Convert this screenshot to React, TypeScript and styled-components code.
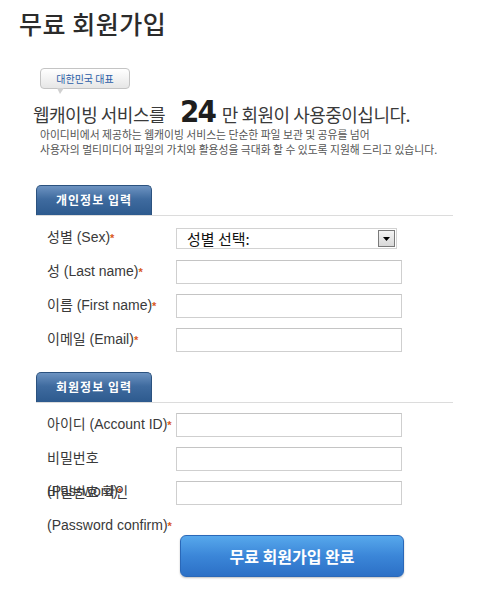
import React from "react"
import styled, { createGlobalStyle } from "styled-components"

const GlobalStyle = createGlobalStyle`
  body {
    margin: 0;
    background: #ffffff;
    font-family: "Liberation Sans", "Noto Sans CJK KR", sans-serif;
    color: #333333;
  }
`

const Page = styled.div`
  width: 494px;
  height: 606px;
  overflow: hidden;
`

const Title = styled.h1`
  margin: 0;
  padding: 8px 0 0 19px;
  height: 30px;
  font-family: "Noto Sans CJK KR", sans-serif;
  font-size: 25px;
  line-height: 30px;
  font-weight: 500;
  letter-spacing: 0.5px;
  color: #2b2b2b;
`

const Intro = styled.div`
  padding: 30px 0 0 33px;
`

const Badge = styled.div`
  position: relative;
  margin-left: 7px;
  width: 90px;
  height: 21px;
  box-sizing: border-box;
  border: 1px solid #c4c4c4;
  border-radius: 4px;
  background: linear-gradient(#ffffff, #e6e6e6);
  color: #2b5ca6;
  font-family: "Noto Sans CJK KR", sans-serif;
  font-size: 10px;
  line-height: 19px;
  text-align: center;

  &::after {
    content: "";
    position: absolute;
    left: 16px;
    bottom: -6px;
    width: 0;
    height: 0;
    border-left: 3px solid transparent;
    border-right: 4px solid transparent;
    border-top: 6px solid #d0d0d0;
  }
`

const Headline = styled.div`
  display: flex;
  align-items: baseline;
  margin-top: 4px;
  height: 32px;
  font-family: "Noto Sans CJK KR", sans-serif;
  font-size: 18px;
  letter-spacing: -0.5px;
  color: #3a3a3a;
  white-space: nowrap;
`

const BigNumber = styled.span`
  display: inline-block;
  margin: 0 7px 0 15px;
  font-family: "Liberation Sans Narrow", "DejaVu Sans Condensed", "Liberation Sans", sans-serif;
  font-stretch: condensed;
  font-size: 31px;
  font-weight: 700;
  letter-spacing: -2px;
  color: #1e1e1e;
`

const Description = styled.p`
  margin: 2px 0 0 7px;
  font-family: "Noto Sans CJK KR", sans-serif;
  font-size: 10.8px;
  line-height: 15px;
  color: #555555;
  white-space: nowrap;
`

const Section = styled.div<{ $top: number }>`
  margin: ${(p) => p.$top}px 0 0 36px;
  width: 417px;
`

const TabBar = styled.div`
  border-bottom: 1px solid #dcdcdc;
  margin-bottom: 5px;
`

const Tab = styled.div`
  width: 116px;
  height: 30px;
  box-sizing: border-box;
  border: 1px solid #2b527f;
  border-bottom: none;
  border-radius: 5px 5px 0 0;
  background: linear-gradient(#6d93c1, #3f6b9f 45%, #2d5a8e);
  color: #ffffff;
  font-family: "Noto Sans CJK KR", sans-serif;
  font-size: 12px;
  font-weight: 700;
  letter-spacing: 1px;
  line-height: 28px;
  text-align: center;
`

const Row = styled.div`
  display: grid;
  grid-template-columns: 140px 226px;
  grid-template-rows: 34px;
  align-items: start;
  height: 34px;
`

const Label = styled.div`
  padding-left: 11px;
  font-size: 14px;
  line-height: 33px;
  color: #3a3a3a;
  white-space: nowrap;
`

const Star = styled.span`
  color: #d9581c;
  font-weight: 700;
  font-size: 11px;
`

const Input = styled.input`
  align-self: center;
  box-sizing: border-box;
  width: 226px;
  height: 24px;
  margin: 0;
  border: 1px solid #cfcfcf;
  border-top-color: #c4c4c4;
  background: #ffffff;
`

const SelectBox = styled.div`
  align-self: center;
  display: flex;
  align-items: center;
  justify-content: space-between;
  box-sizing: border-box;
  width: 221px;
  height: 21px;
  margin-top: 1px;
  padding: 0 1px 0 10px;
  border: 1px solid #d2d2d2;
  background: #ffffff;
  font-family: "Noto Sans CJK KR", sans-serif;
  font-size: 15px;
  color: #111111;
`

const DropButton = styled.span`
  display: flex;
  align-items: center;
  justify-content: center;
  box-sizing: border-box;
  width: 17px;
  height: 17px;
  border: 1px solid #7a7a7a;
  background: linear-gradient(#f4f4f4, #d8d8d8);
`

const SubmitButton = styled.button`
  display: block;
  margin: 25px 0 0 180px;
  width: 224px;
  height: 42px;
  border: 1px solid #2a68b8;
  border-radius: 6px;
  background: linear-gradient(#57a8ec, #3b86d8 50%, #2c70c6);
  box-shadow: 0 1px 2px rgba(0, 0, 0, 0.25);
  color: #ffffff;
  font-family: "Noto Sans CJK KR", sans-serif;
  font-size: 16px;
  font-weight: 700;
  cursor: pointer;
`

function FieldRow({ label, children }: { label: React.ReactNode; children: React.ReactNode }) {
  return (
    <Row>
      <Label>{label}</Label>
      {children}
    </Row>
  )
}

export default function App() {
  return (
    <Page>
      <GlobalStyle />
      <Title>무료 회원가입</Title>

      <Intro>
        <Badge>대한민국 대표</Badge>
        <Headline>
          웹캐이빙 서비스를<BigNumber>24</BigNumber>만 회원이 사용중이십니다.
        </Headline>
        <Description>
          아이디비에서 제공하는 웹캐이빙 서비스는 단순한 파일 보관 및 공유를 넘어
          <br />
          사용자의 멀티미디어 파일의 가치와 활용성을 극대화 할 수 있도록 지원해 드리고 있습니다.
        </Description>
      </Intro>

      <Section $top={28}>
        <TabBar>
          <Tab>개인정보 입력</Tab>
        </TabBar>
        <FieldRow label={<>성별 (Sex)<Star>*</Star></>}>
          <SelectBox>
            성별 선택:
            <DropButton>
              <svg width="7" height="4" viewBox="0 0 7 4">
                <path d="M0 0 H7 L3.5 4 Z" fill="#000" />
              </svg>
            </DropButton>
          </SelectBox>
        </FieldRow>
        <FieldRow label={<>성 (Last name)<Star>*</Star></>}>
          <Input type="text" />
        </FieldRow>
        <FieldRow label={<>이름 (First name)<Star>*</Star></>}>
          <Input type="text" />
        </FieldRow>
        <FieldRow label={<>이메일 (Email)<Star>*</Star></>}>
          <Input type="text" />
        </FieldRow>
      </Section>

      <Section $top={15}>
        <TabBar>
          <Tab>회원정보 입력</Tab>
        </TabBar>
        <FieldRow label={<>아이디 (Account ID)<Star>*</Star></>}>
          <Input type="text" />
        </FieldRow>
        <FieldRow label={<>비밀번호<br />(Password)<Star>*</Star></>}>
          <Input type="password" />
        </FieldRow>
        <FieldRow label={<>비밀번호 확인<br />(Password confirm)<Star>*</Star></>}>
          <Input type="password" />
        </FieldRow>
      </Section>

      <SubmitButton type="button">무료 회원가입 완료</SubmitButton>
    </Page>
  )
}
